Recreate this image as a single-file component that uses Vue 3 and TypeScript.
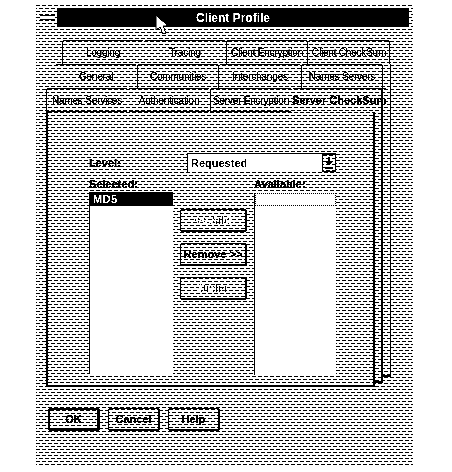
<script setup lang="ts">
interface Tab {
  label: string;
  left?: boolean;
  right?: boolean;
  active?: boolean;
}

const tabRows: Tab[][] = [
  [
    { label: "Logging", left: true },
    { label: "Tracing" },
    { label: "Client Encryption", left: true, right: true },
    { label: "Client CheckSum", right: true },
  ],
  [
    { label: "General" },
    { label: "Communities", left: true, right: true },
    { label: "Interchanges" },
    { label: "Names Servers", left: true, right: true },
  ],
  [
    { label: "Names Services", left: true },
    { label: "Authentication" },
    { label: "Server Encryption", left: true },
    { label: "Server CheckSum", active: true },
  ],
];

const moveButtons = [
  { label: "<< Add", disabled: true },
  { label: "Remove >>", disabled: false },
  { label: "Order", disabled: true },
];
const footerButtons = ["OK", "Cancel", "Help"];
</script>

<template>
  <div class="window">
    <div class="titlebar">
      <div class="sysmenu"><span></span></div>
      <div class="title">Client Profile</div>
    </div>

    <div class="notebook">
      <div class="sheet sheet-far"></div>
      <div class="sheet sheet-mid"></div>

      <div
        v-for="(row, i) in tabRows"
        :key="i"
        class="tabrow"
        :class="'tabrow-' + i"
      >
        <div
          v-for="tab in row"
          :key="tab.label"
          class="tab"
          :class="{ left: tab.left, right: tab.right, active: tab.active }"
        >
          {{ tab.label }}
        </div>
      </div>

      <div class="page">
        <div class="level">
          <label>Level:</label>
          <div class="combo">
            <span>Requested</span>
            <div class="drop">
              <svg width="12" height="14" viewBox="0 0 12 14">
                <rect x="5" y="1" width="2" height="4" fill="#000" />
                <path d="M2 5h8L6 10z" fill="#000" />
                <rect x="2" y="11" width="8" height="2" fill="#000" />
              </svg>
            </div>
          </div>
        </div>

        <div class="lists">
          <div class="col col-selected">
            <label>Selected:</label>
            <div class="listbox">
              <div class="item selected">MD5</div>
            </div>
          </div>
          <div class="moves">
            <button
              v-for="b in moveButtons"
              :key="b.label"
              class="btn"
              :class="{ disabled: b.disabled }"
            >
              <span>{{ b.label }}</span>
            </button>
          </div>
          <div class="col col-available">
            <label>Available:</label>
            <div class="listbox">
              <div class="item focus"></div>
            </div>
          </div>
        </div>
      </div>
    </div>

    <div class="footer">
      <button
        v-for="(b, i) in footerButtons"
        :key="b"
        class="btn foot"
        :class="{ primary: i === 0 }"
      >
        <span>{{ b }}</span>
      </button>
    </div>

    <svg class="cursor" width="14" height="22" viewBox="0 0 14 22">
      <path
        d="M1 1v15l4-3 3 7 3-1-3-7h5z"
        fill="#fff"
        stroke="#000"
        stroke-width="1"
      />
    </svg>
  </div>
</template>

<style scoped>
.window {
  --hatch: url("data:image/svg+xml,%3Csvg xmlns='http://www.w3.org/2000/svg' width='6' height='6'%3E%3Crect width='6' height='6' fill='%23fff'/%3E%3Crect x='0' y='0' width='4' height='1'/%3E%3Crect x='3' y='3' width='3' height='1'/%3E%3Crect x='0' y='3' width='1' height='1'/%3E%3C/svg%3E");
  position: relative;
  box-sizing: border-box;
  width: 377px;
  height: 461px;
  margin: 5px 0 0 36px;
  padding-top: 3px;
  background: #fff var(--hatch);
  font-family: "Liberation Sans", Arial, sans-serif;
  font-size: 11px;
  color: #000;
  filter: grayscale(1) contrast(12);
}
label {
  font-weight: 700;
  -webkit-text-stroke: 0.3px #000;
}

.titlebar {
  display: flex;
  height: 19px;
  padding-left: 1px;
}
.sysmenu {
  display: flex;
  width: 20px;
  align-items: center;
  justify-content: center;
}
.sysmenu span {
  width: 15px;
  height: 3px;
  border-top: 1px solid #000;
  border-bottom: 1px solid #000;
  background: #fff;
}
.title {
  width: 352px;
  background: #000;
  color: #fff;
  font-size: 12px;
  font-weight: 700;
  line-height: 21px;
  text-align: center;
}

.notebook {
  position: relative;
  margin-top: 13px;
}
.sheet {
  position: absolute;
  border-right: 2px solid #000;
  border-bottom: 2px solid #000;
}
.sheet-far {
  top: 24px;
  left: 347px;
  width: 7px;
  height: 311px;
  border-right-width: 1px;
}
.sheet-mid {
  top: 48px;
  left: 339px;
  width: 6px;
  height: 293px;
}

.tabrow {
  position: relative;
  display: flex;
  height: 24px;
}
.tabrow-0 {
  margin-left: 26px;
}
.tabrow-1 {
  margin-left: 19px;
}
.tabrow-2 {
  height: 25px;
  margin-left: 10px;
}
.tab {
  box-sizing: border-box;
  flex: 0 0 82px;
  border-top: 1px solid #000;
  border-left: 1px solid transparent;
  border-right: 1px solid transparent;
  border-radius: 3px 3px 0 0;
  font-size: 10px;
  letter-spacing: -0.2px;
  line-height: 23px;
  text-align: center;
  white-space: nowrap;
  -webkit-text-stroke: 0.2px #000;
}
.tab.left {
  border-left-color: #000;
}
.tab.right {
  border-right-color: #000;
}
.tabrow-2 .tab {
  position: relative;
  border-bottom: 2px solid #000;
}
.tab.active {
  border-bottom-color: transparent !important;
  border-right-color: transparent;
  font-size: 11px;
  font-weight: 700;
  letter-spacing: 0;
  text-indent: -1px;
}

.page {
  position: relative;
  box-sizing: border-box;
  width: 329px;
  height: 275px;
  margin-left: 10px;
  margin-top: -1px;
  padding: 41px 0 0 41px;
  border-left: 2px solid #000;
  border-right: 2px solid #000;
  border-bottom: 2px solid #000;
  background: #fff var(--hatch);
}
.tabrow-2 .tab:last-child {
  z-index: 1;
}

.level {
  display: flex;
  align-items: center;
}
.level label {
  width: 98px;
}
.combo {
  display: flex;
  box-sizing: border-box;
  width: 149px;
  height: 19px;
  align-items: center;
  padding-left: 3px;
  border-left: 1px solid #000;
  border-top: 1px solid #000;
  background: #fff;
  font-weight: 700;
}
.combo span {
  flex: 1;
}
.drop {
  display: flex;
  box-sizing: border-box;
  width: 14px;
  height: 18px;
  align-items: center;
  justify-content: center;
  border: 1px solid #000;
  background: #fff var(--hatch);
}

.lists {
  display: flex;
  margin-top: 5px;
}
.col label {
  display: block;
  height: 15px;
  line-height: 15px;
}
.col-selected {
  width: 84px;
}
.col-available {
  width: 82px;
}
.listbox {
  height: 182px;
  border-left: 1px solid #000;
  background: #fff;
}
.item {
  box-sizing: border-box;
  height: 14px;
  padding-left: 3px;
  font-weight: 700;
  line-height: 14px;
}
.item.selected {
  background: #000;
  color: #fff;
  letter-spacing: 0.5px;
}
.item.focus {
  margin-top: 1px;
  height: 13px;
  border: 1px dotted #000;
}

.moves {
  display: flex;
  flex-direction: column;
  gap: 11px;
  width: 67px;
  margin: 32px 7px 0 7px;
}
.btn {
  display: block;
  box-sizing: border-box;
  width: 67px;
  height: 23px;
  padding: 0;
  border: 1px solid #000;
  border-right-width: 2px;
  border-bottom-width: 2px;
  border-radius: 2px;
  background: #fff var(--hatch);
  color: #000;
  font: 700 11px "Liberation Sans", Arial, sans-serif;
  -webkit-text-stroke: 0.2px #000;
}
.btn.disabled span {
  color: transparent;
  -webkit-text-stroke: 0;
  background: repeating-linear-gradient(90deg, #000 0 1px, #fff 1px 3px);
  -webkit-background-clip: text;
  background-clip: text;
}

.footer {
  display: flex;
  gap: 8px;
  margin: 21px 0 0 12px;
}
.btn.foot {
  width: 52px;
}
.btn.primary {
  border-width: 2px;
  border-right-width: 3px;
  border-bottom-width: 3px;
}

.cursor {
  position: absolute;
  top: 9px;
  left: 119px;
}
</style>

<style>
html,
body {
  background: #fff;
}
</style>
